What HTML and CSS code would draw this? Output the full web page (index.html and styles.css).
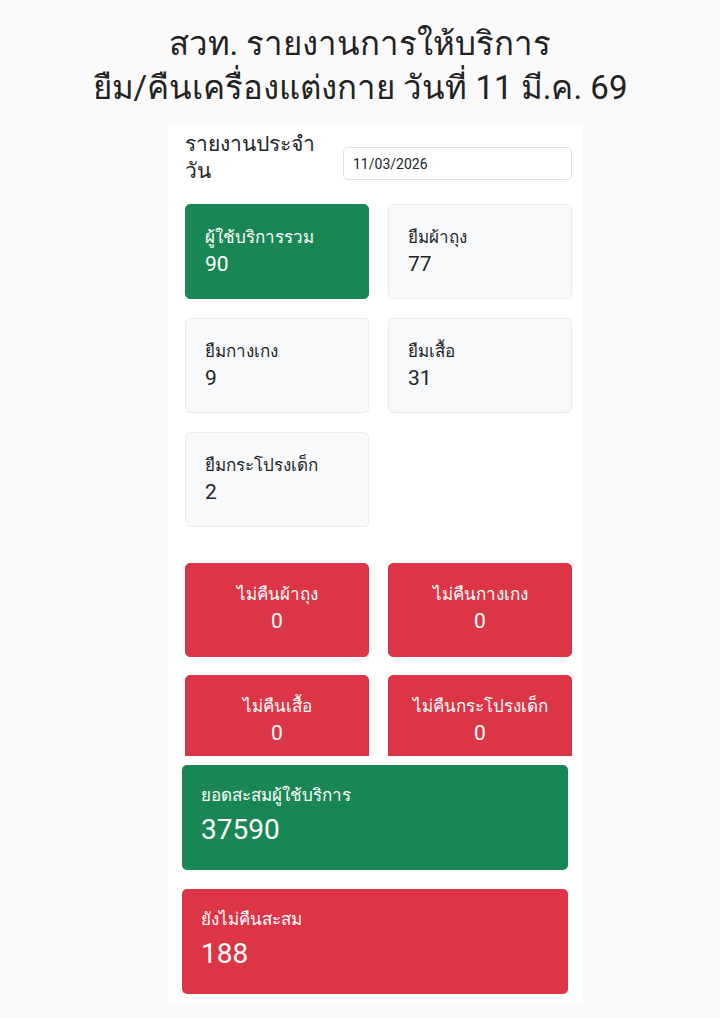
FILE: index.html
```html
<!DOCTYPE html>
<html lang="th">
<head>
  <meta charset="UTF-8" />
  <meta name="viewport" content="width=device-width, initial-scale=1.0"/>
  <title>สวท. รายงานการให้บริการ</title>
  <link rel="stylesheet" href="styles.css">
</head>
<body>
  <h1 class="page-title">สวท. รายงานการให้บริการ<br>ยืม/คืนเครื่องแต่งกาย วันที่ 11 มี.ค. 69</h1>

  <div class="panel">
    <div class="report-head">
      <label for="reportDate" class="report-label">รายงานประจำวัน</label>
      <input type="text" id="reportDate" class="date-input" value="11/03/2026" />
    </div>

    <div class="stat-grid">
      <div class="stat-card success">
        <div class="stat-label">ผู้ใช้บริการรวม</div>
        <div class="stat-value">90</div>
      </div>
      <div class="stat-card">
        <div class="stat-label">ยืมผ้าถุง</div>
        <div class="stat-value">77</div>
      </div>
      <div class="stat-card">
        <div class="stat-label">ยืมกางเกง</div>
        <div class="stat-value">9</div>
      </div>
      <div class="stat-card">
        <div class="stat-label">ยืมเสื้อ</div>
        <div class="stat-value">31</div>
      </div>
      <div class="stat-card">
        <div class="stat-label">ยืมกระโปรงเด็ก</div>
        <div class="stat-value">2</div>
      </div>
    </div>

    <div class="pending-wrap">
      <div class="stat-grid pending">
        <div class="stat-card danger">
          <div class="stat-label">ไม่คืนผ้าถุง</div>
          <div class="stat-value">0</div>
        </div>
        <div class="stat-card danger">
          <div class="stat-label">ไม่คืนกางเกง</div>
          <div class="stat-value">0</div>
        </div>
        <div class="stat-card danger">
          <div class="stat-label">ไม่คืนเสื้อ</div>
          <div class="stat-value">0</div>
        </div>
        <div class="stat-card danger">
          <div class="stat-label">ไม่คืนกระโปรงเด็ก</div>
          <div class="stat-value">0</div>
        </div>
      </div>
    </div>

    <div class="total-card success">
      <div class="stat-label">ยอดสะสมผู้ใช้บริการ</div>
      <div class="total-value">37590</div>
    </div>

    <div class="total-card danger">
      <div class="stat-label">ยังไม่คืนสะสม</div>
      <div class="total-value">188</div>
    </div>
  </div>
</body>
</html>
```

FILE: styles.css
```css
* {
  margin: 0;
  padding: 0;
  box-sizing: border-box;
}

body {
  font-family: Roboto, "Noto Sans", sans-serif;
  background: #fafafa;
  color: #212529;
  padding-top: 22px;
}

.page-title {
  font-weight: 400;
  font-size: 33px;
  line-height: 44px;
  text-align: center;
  color: #222;
}

.panel {
  width: 414px;
  margin: 15px 0 0 168px;
  padding: 6px 10px 9px 17px;
  background: #fff;
}

.report-head {
  display: flex;
  align-items: flex-start;
}

.report-label {
  width: 158px;
  font-size: 21px;
  line-height: 27px;
  padding-right: 14px;
}

.date-input {
  flex: 1;
  height: 33px;
  margin-top: 16px;
  padding: 0 9px;
  font-family: Roboto, sans-serif;
  font-size: 14px;
  color: #212529;
  border: 1px solid #dee2e6;
  border-radius: 5px;
  background: #fff;
}

.stat-grid {
  display: grid;
  grid-template-columns: 1fr 1fr;
  column-gap: 19px;
  row-gap: 19px;
  margin-top: 19px;
}

.stat-card {
  height: 95px;
  padding: 20px 19px;
  background: #f8f9fa;
  border: 1px solid #e9ecef;
  border-radius: 5px;
}

.stat-label {
  font-size: 17px;
  line-height: 24px;
}

.stat-value {
  font-size: 21px;
  line-height: 30px;
}

.success {
  background: #198754;
  border-color: #198754;
  color: #fff;
}

.danger {
  background: #dc3545;
  border-color: #dc3545;
  color: #fff;
}

.pending-wrap {
  height: 229px;
  overflow: hidden;
}

.pending {
  margin-top: 36px;
  row-gap: 18px;
}

.pending .stat-card {
  height: 94px;
  padding-top: 18px;
  text-align: center;
}

.total-card {
  width: 386px;
  height: 105px;
  margin: 9px 0 0 -3px;
  padding: 18px 19px;
  border-radius: 5px;
}

.total-card + .total-card {
  margin-top: 19px;
}

.total-value {
  font-size: 28px;
  line-height: 46px;
}
```
